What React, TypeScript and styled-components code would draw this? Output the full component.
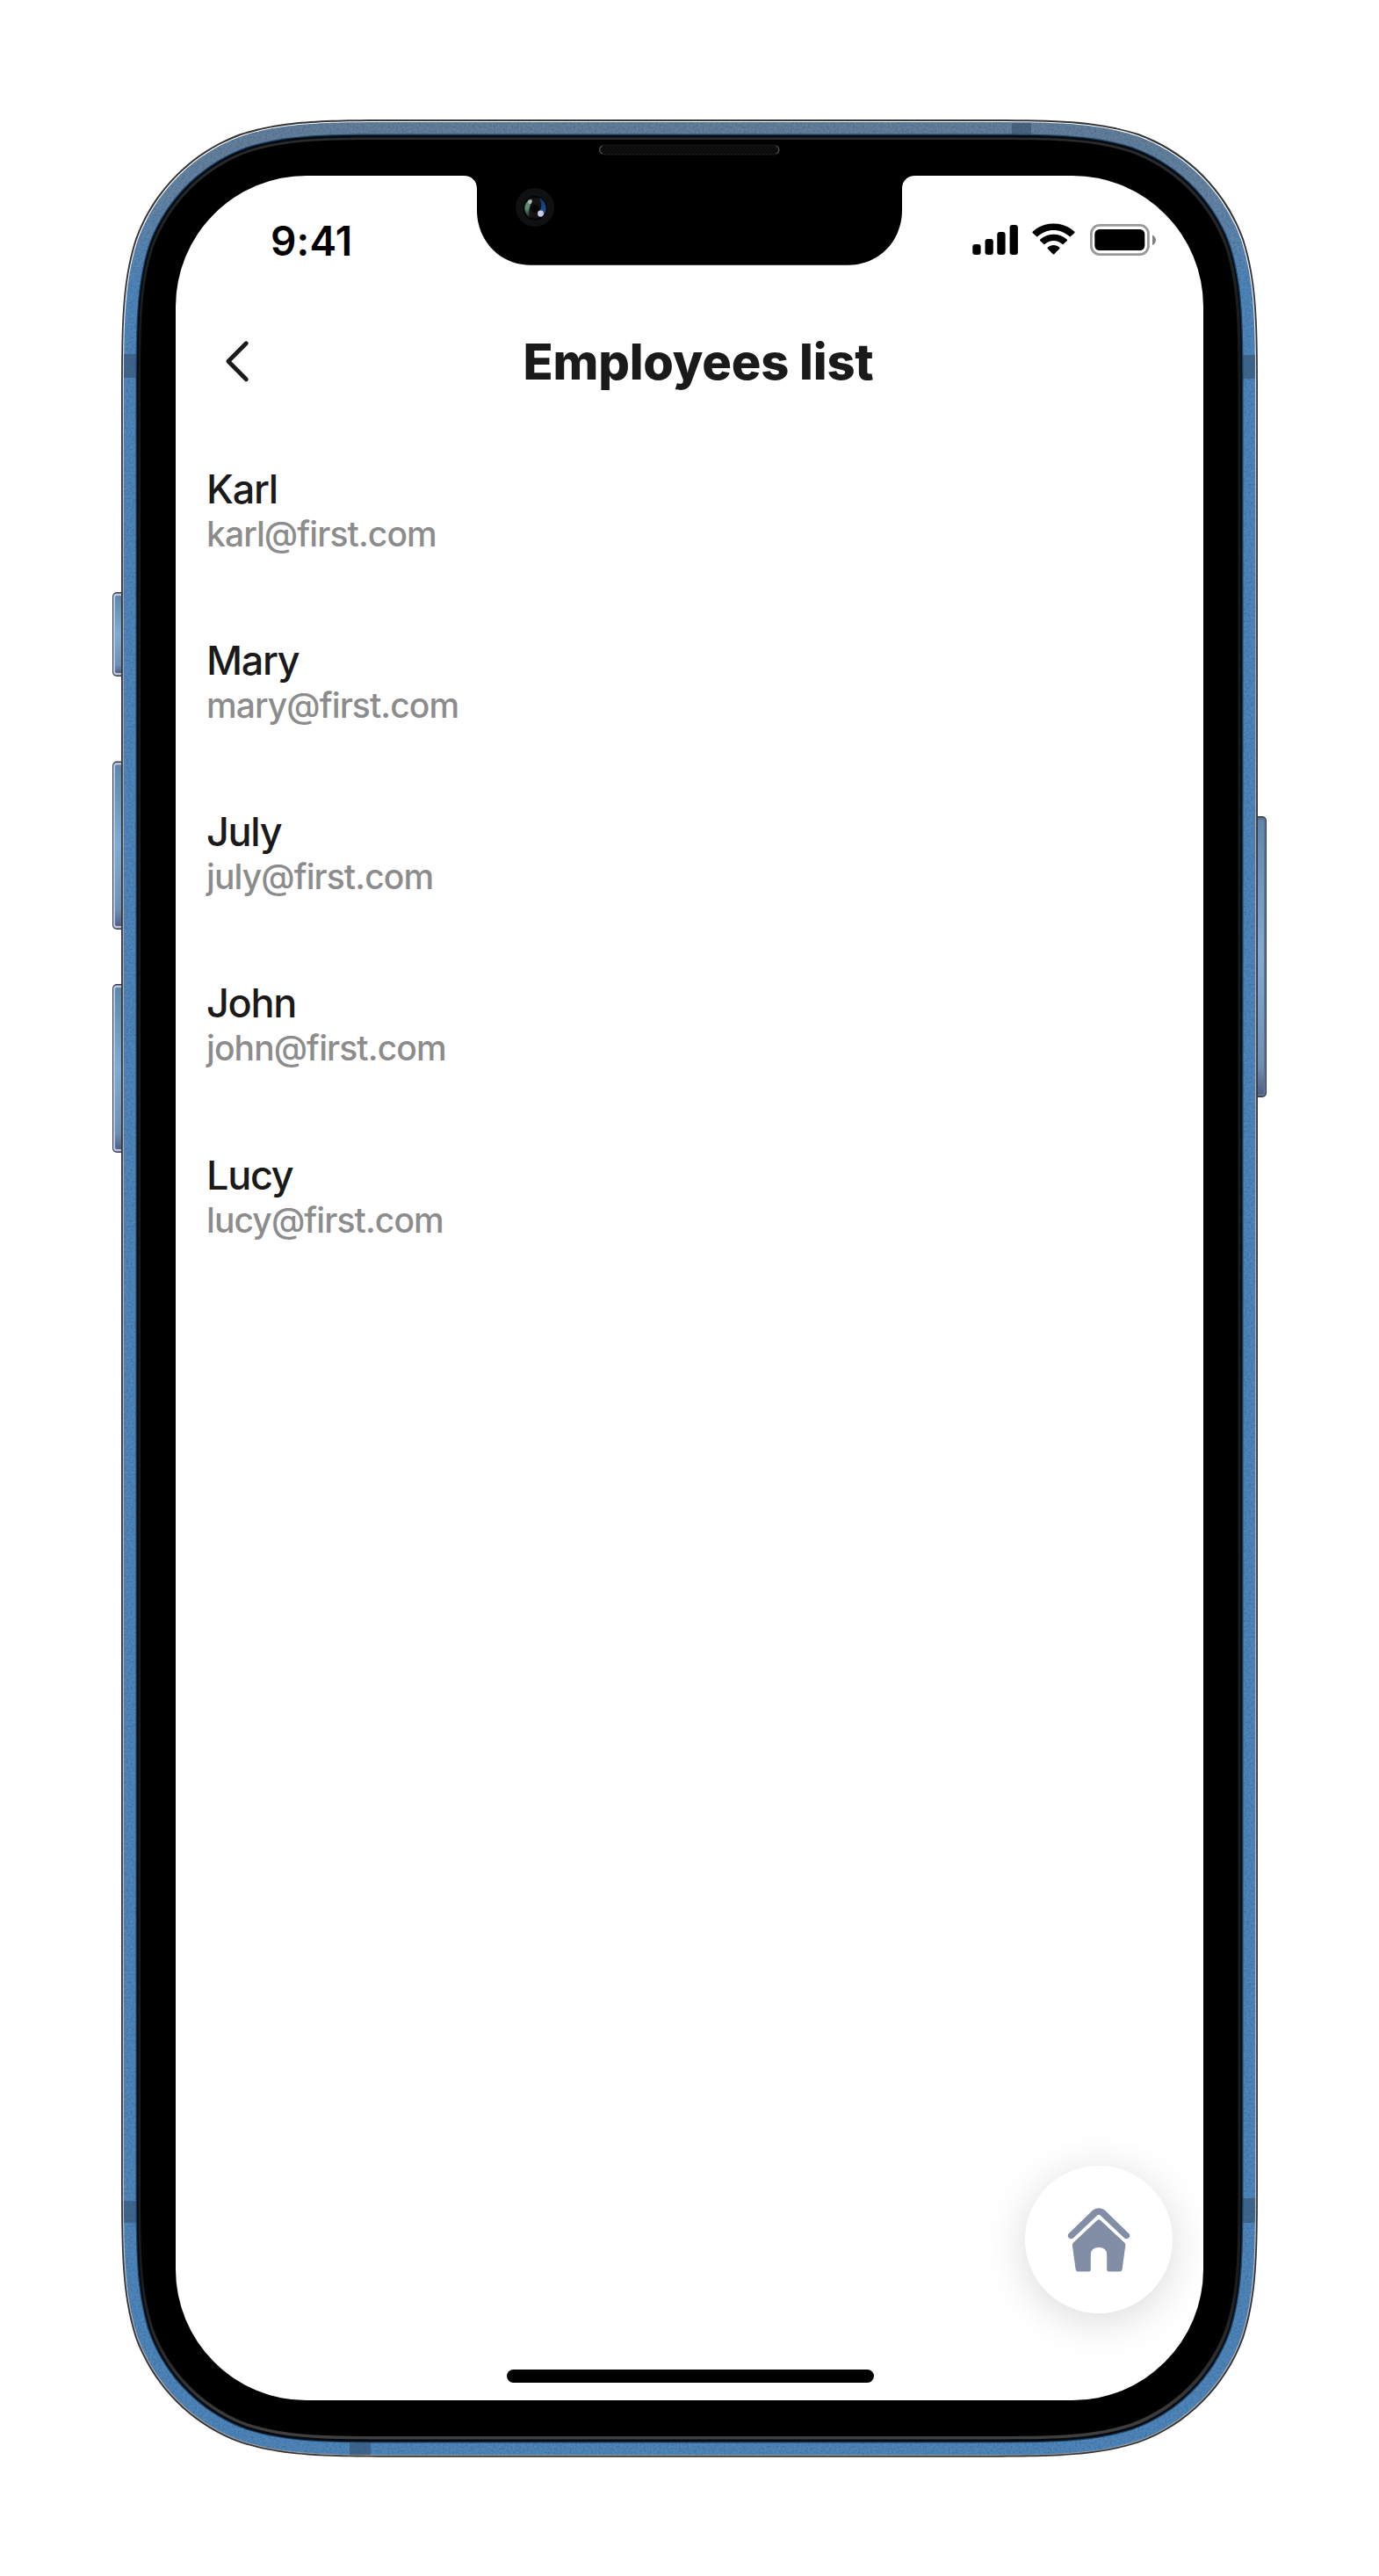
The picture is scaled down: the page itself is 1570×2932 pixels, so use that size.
import React from "react";
import styled, { createGlobalStyle } from "styled-components";

const GlobalStyle = createGlobalStyle`
  *, *::before, *::after { box-sizing: border-box; }
  body { margin: 0; background: #fff; }
`;

const Stage = styled.main`
  position: relative;
  width: 1570px;
  height: 2932px;
  padding: 200px;
  background: #fff;
  overflow: hidden;
  font-family: Inter, "Liberation Sans", sans-serif;
`;

const Device = styled.svg`
  position: absolute;
  inset: 0;
  display: block;
`;

const Screen = styled.section`
  position: relative;
  display: flex;
  flex-direction: column;
  width: 1170px;
  height: 2532px;
  border-radius: 149px;
  background: #fff;
  overflow: hidden;
`;

const StatusBar = styled.header`
  display: flex;
  justify-content: space-between;
  align-items: flex-start;
  height: 141px;
  padding: 46px 54px 0 108px;
`;

const Time = styled.time`
  font-size: 46px;
  line-height: 56px;
  font-weight: 600;
  letter-spacing: 0.2px;
  color: #000;
`;

const Indicators = styled.div`
  display: flex;
  padding-top: 8px;
`;

const TitleBar = styled.div`
  display: grid;
  grid-template-columns: 140px 1fr 120px;
  align-items: center;
  height: 140px;
`;

const BackButton = styled.button`
  display: flex;
  padding: 0 0 0 54px;
  border: 0;
  background: none;
`;

const Title = styled.h1`
  margin: 0;
  padding-top: 2px;
  text-align: center;
  white-space: nowrap;
  font-size: 56px;
  line-height: 68px;
  font-weight: 800;
  letter-spacing: -0.2px;
  color: #1a1a1a;
`;

const List = styled.ul`
  display: flex;
  flex-direction: column;
  margin: 0;
  padding: 47.6px 35px 0;
  list-style: none;
`;

const Employee = styled.li`
  height: 195.25px;
`;

const Name = styled.div`
  font-size: 45px;
  line-height: 56px;
  font-weight: 500;
  letter-spacing: -1.3px;
  color: #1a1a1a;
`;

const Email = styled.div`
  font-size: 39px;
  line-height: 46px;
  font-weight: 500;
  letter-spacing: -0.9px;
  color: #8c8c8c;
`;

const HomeButton = styled.button`
  display: flex;
  align-items: center;
  justify-content: center;
  align-self: flex-end;
  width: 168px;
  height: 168px;
  margin: auto 35px 99px 0;
  padding: 0;
  border: 0;
  border-radius: 50%;
  background: #fff;
  box-shadow: 0 8px 48px rgba(0, 0, 0, 0.15);
`;

const HomeIndicator = styled.div`
  position: absolute;
  left: 376.5px;
  bottom: 20px;
  width: 418px;
  height: 15px;
  border-radius: 8px;
  background: #000;
`;

/* Rounded rectangle whose corners ease into the straight edges. */
const smoothRect = (l: number, t: number, r: number, b: number, q: number) => {
  const corner = (cx: number, cy: number, sx: number, sy: number, rev: boolean) => {
    const k = [
      [1.52866, 0], [1.08849, 0], [0.8684, 0], [0.63149, 0.07491],
      [0.37282, 0.16906], [0.16906, 0.37282], [0.07491, 0.63149],
      [0, 0.8684], [0, 1.08849], [0, 1.52866],
    ].map(([x, y]) => `${(cx + sx * x * q).toFixed(2)} ${(cy + sy * y * q).toFixed(2)}`);
    const p = rev ? k.reverse() : k;
    return `${p[0]}C${p[1]} ${p[2]} ${p[3]}C${p[4]} ${p[5]} ${p[6]}C${p[7]} ${p[8]} ${p[9]}`;
  };
  return `M${corner(l, t, 1, 1, true)}L${corner(r, t, -1, 1, false)}L${corner(r, b, -1, -1, true)}L${corner(l, b, 1, -1, false)}Z`;
};

const SideButton = ({ x, y, h, flip }: { x: number; y: number; h: number; flip?: boolean }) => (
  <g transform={flip ? `translate(${x + 14} ${y}) scale(-1 1)` : `translate(${x} ${y})`}>
    <rect width="22" height={h} rx="5" fill="#343a4e" />
    <rect x="1" y="1.5" width="21" height={h - 3} rx="4" fill={flip ? "#5f7291" : "#b9c6de"} />
    <rect x="3" y="4" width="19" height={h - 8} rx="2" fill="url(#buttonFace)" />
  </g>
);

const DeviceFrame = () => (
  <Device width="1570" height="2932" viewBox="0 0 1570 2932" aria-hidden="true">
    <defs>
      <linearGradient id="buttonFace" x1="0" y1="0" x2="0" y2="1">
        <stop offset="0" stopColor="#5f87ae" />
        <stop offset="0.5" stopColor="#80abd4" />
        <stop offset="0.9" stopColor="#6d8fb4" />
        <stop offset="1" stopColor="#525f88" />
      </linearGradient>
      <linearGradient id="band" gradientUnits="userSpaceOnUse" x1="0" y1="136" x2="0" y2="330">
        <stop offset="0" stopColor="#647f96" />
        <stop offset="0.45" stopColor="#6885a0" />
        <stop offset="1" stopColor="#4f87ba" />
      </linearGradient>
      <linearGradient id="edge" gradientUnits="userSpaceOnUse" x1="0" y1="136" x2="0" y2="2797">
        <stop offset="0" stopColor="#fff" />
        <stop offset="0.1" stopColor="#e4e4ea" />
        <stop offset="0.2" stopColor="#aaa6b4" />
        <stop offset="0.9" stopColor="#c4c4cc" />
        <stop offset="1" stopColor="#989898" />
      </linearGradient>
      <linearGradient id="lip" gradientUnits="userSpaceOnUse" x1="0" y1="156" x2="0" y2="2776">
        <stop offset="0" stopColor="#2a2c2d" />
        <stop offset="0.1" stopColor="#141819" />
        <stop offset="0.93" stopColor="#191c1e" />
        <stop offset="1" stopColor="#404040" />
      </linearGradient>
      <filter id="grain" x="0" y="0" width="100%" height="100%" colorInterpolationFilters="sRGB">
        <feTurbulence type="fractalNoise" baseFrequency="0.45" numOctaves="2" seed="4" result="n" />
        <feColorMatrix in="n" type="matrix" values="0 0 0 0 0.2  0 0 0 0 0.35  0 0 0 0 0.55  1.1 0 0 0 -0.4" result="d" />
        <feComposite in="d" in2="SourceGraphic" operator="in" result="g" />
        <feMerge>
          <feMergeNode in="SourceGraphic" />
          <feMergeNode in="g" />
        </feMerge>
      </filter>
      <pattern id="mesh" width="4" height="4" patternUnits="userSpaceOnUse">
        <rect width="4" height="4" fill="#101010" />
        <path d="M0 0h2v2H0zM2 2h2v2H2z" fill="#090909" />
      </pattern>
      <linearGradient id="lensBlue" x1="0" y1="0" x2="0" y2="1">
        <stop offset="0" stopColor="#123055" />
        <stop offset="1" stopColor="#1d5fae" />
      </linearGradient>
      <linearGradient id="lensGreen" x1="0" y1="0" x2="0" y2="1">
        <stop offset="0" stopColor="#5f7f72" />
        <stop offset="0.5" stopColor="#5c8f76" />
        <stop offset="1" stopColor="#14241d" />
      </linearGradient>
    </defs>

    <SideButton x={128} y={674} h={96} />
    <SideButton x={128} y={866.5} h={191.5} />
    <SideButton x={128} y={1120} h={192} />
    <SideButton x={1428} y={929} h={320} flip />

    <path d={smoothRect(138, 136, 1432, 2796.7, 215)} fill="#343434" />
    <path d={smoothRect(139.8, 137.9, 1430.2, 2795, 213.5)} fill="url(#edge)" />
    <path d={smoothRect(141, 139, 1429, 2794, 212.5)} fill="url(#band)" filter="url(#grain)" />

    <g fill="#33506e" opacity="0.6">
      <rect x="1152" y="140" width="22" height="17" />
      <rect x="141" y="403" width="16" height="27" />
      <rect x="1413" y="404" width="16" height="27" />
      <rect x="141" y="2505" width="16" height="25" />
      <rect x="1413" y="2502" width="16" height="28" />
      <rect x="398" y="2778" width="24" height="16" />
    </g>

    <path d={smoothRect(154.5, 152.5, 1415.5, 2780.5, 199)} fill="#1c4165" />
    <path d={smoothRect(155.7, 153.7, 1414.2, 2779.3, 198)} fill="#040a10" />
    <path d={smoothRect(157.5, 156.5, 1412.7, 2776.5, 196)} fill="url(#lip)" />
    <path d={smoothRect(160, 159, 1409.5, 2773, 194)} fill="#000" />
  </Device>
);

const NotchShape = styled.svg`
  position: absolute;
  left: 328px;
  top: 0;
  display: block;
`;

const Notch = () => (
  <NotchShape width="514" height="102" viewBox="0 0 514 102" aria-hidden="true">
    <path
      d="M0 0C9 0 15 6 15 15V39C15 75 42 101.700 76 101.700H438C472 101.700 499 75 499 39V15C499 6 505 0 514 0Z"
      fill="#000"
    />
  </NotchShape>
);

const SensorLayer = styled.svg`
  position: absolute;
  left: 0;
  top: 0;
  display: block;
`;

const Sensors = () => (
  <SensorLayer width="1570" height="320" viewBox="0 0 1570 320" aria-hidden="true">
    <rect x="682.500" y="165" width="204" height="11" rx="5.500" fill="url(#mesh)" stroke="#1b1b1b" />
    <path d="M686 166c-4.500 2-4.500 7 0 9M883.500 166c4.500 2 4.500 7 0 9" fill="none" stroke="#4a4a4a" strokeWidth="1.300" />
    <circle cx="609" cy="236" r="22" fill="#0f1011" />
    <circle cx="609" cy="236.900" r="13.900" fill="#040404" />
    <circle cx="609" cy="236.900" r="11.800" fill="#141212" />
    <path d="M603 227c-8 5-7 16 0 20.500c-1.500-7-.5-13 3-18.500c0-2.500-1.500-3-3-2z" fill="url(#lensGreen)" />
    <path d="M613.500 225c9.500 3 11 17 3 22c-3 .5-4-1-4.500-2.500c5-6 5.500-13 1.500-19.500z" fill="url(#lensBlue)" />
    <circle cx="609" cy="237.300" r="4.500" fill="#050505" />
    <circle cx="603.300" cy="229.800" r="2.300" fill="#a9bdb4" />
    <circle cx="615.500" cy="243" r="3.400" fill="#cfcbe0" />
  </SensorLayer>
);

const SignalIcon = () => (
  <svg width="53" height="37" viewBox="0 0 53 37" fill="#000">
    <rect x="1.300" y="24" width="9.300" height="12" rx="3" />
    <rect x="15.500" y="18" width="9.300" height="18" rx="3" />
    <rect x="29.300" y="10" width="9.300" height="26" rx="3" />
    <rect x="43.600" y="2" width="9.300" height="34" rx="3" />
  </svg>
);

const WifiIcon = styled.svg`
  margin-left: 16px;
`;

const BatteryIcon = styled.svg`
  margin-left: 16px;
`;

const employees = [
  { name: "Karl", email: "karl@first.com" },
  { name: "Mary", email: "mary@first.com" },
  { name: "July", email: "july@first.com" },
  { name: "John", email: "john@first.com" },
  { name: "Lucy", email: "lucy@first.com" },
];

export default function App() {
  return (
    <Stage>
      <GlobalStyle />
      <DeviceFrame />
      <Screen>
        <StatusBar>
          <Time>9:41</Time>
          <Indicators>
            <SignalIcon />
            <WifiIcon width="49" height="36" viewBox="0 0 49 36" fill="#000">
              <path d="M24.500 7.900C31.300 7.900 37.700 10.500 42.500 15.100Q43.300 15.800 44 15.100L48.200 11.200Q48.900 10.400 48.200 9.600C35-2.400 14-2.400 .8 9.600Q.1 10.400 .8 11.200L5 15.100Q5.700 15.800 6.500 15.100C11.300 10.500 17.700 7.900 24.500 7.900Z" />
              <path d="M24.500 20C28.200 20 31.600 21.400 34.300 23.800Q35.100 24.500 35.900 23.800L39.800 20.100Q40.500 19.300 39.700 18.500C31.200 10.700 17.800 10.700 9.300 18.500Q8.500 19.300 9.200 20.100L13.100 23.800Q13.900 24.500 14.700 23.800C17.400 21.400 20.800 20 24.500 20Z" />
              <path d="M31.300 29Q31.900 28.300 31.300 27.700C27.400 24.200 21.600 24.200 17.700 27.700Q17.100 28.300 17.700 29L23.800 35.300Q24.500 35.900 25.200 35.300Z" />
            </WifiIcon>
            <BatteryIcon width="76" height="38" viewBox="0 0 76 38">
              <rect x="2.400" y="2.400" width="65" height="33.200" rx="9.500" fill="none" stroke="#000" strokeOpacity="0.4" strokeWidth="2.800" />
              <rect x="6.300" y="7" width="57" height="24" rx="5.500" fill="#000" />
              <path d="M72 13.500V25C74.300 24.100 75.900 21.800 75.900 19.200S74.300 14.400 72 13.500Z" fill="#000" fillOpacity="0.5" />
            </BatteryIcon>
          </Indicators>
        </StatusBar>
        <TitleBar>
          <BackButton aria-label="Back">
            <svg width="30" height="50" viewBox="0 0 30 50" fill="none" stroke="#1a1a1a" strokeWidth="4.800" strokeLinecap="round" strokeLinejoin="round">
              <path d="M26.300 4.800L5.900 25.200L26.300 45.800" />
            </svg>
          </BackButton>
          <Title>Employees list</Title>
        </TitleBar>
        <List>
          {employees.map((e) => (
            <Employee key={e.email}>
              <Name>{e.name}</Name>
              <Email>{e.email}</Email>
            </Employee>
          ))}
        </List>
        <HomeButton aria-label="Home">
          <svg width="72" height="74" viewBox="0 0 72 74" fill="#828ea6">
            <path d="M36 1.300Q40 1.300 43 3.800L70.300 30.300Q72.300 32.500 70.300 35Q67.800 37.300 65.200 35.500L37.500 9.300Q36 8.100 34.500 9.300L6.800 35.500Q4.200 37.300 1.700 35Q-.3 32.500 1.700 30.300L29 3.800Q32 1.300 36 1.300Z" />
            <path d="M34.200 15Q36 13.600 37.800 15L65.300 40.700Q66.500 42.200 66.300 43.900L62.600 71Q62.200 73.500 59.500 73.500H48Q45.200 73.500 45.200 71V54.500Q45.200 46 36 46T26.800 54.500V71Q26.800 73.500 24.500 73.500H12.500Q10 73.500 9.600 71L5.900 43.900Q5.700 42.200 6.900 40.700Z" />
          </svg>
        </HomeButton>
        <HomeIndicator />
        <Notch />
      </Screen>
      <Sensors />
    </Stage>
  );
}
